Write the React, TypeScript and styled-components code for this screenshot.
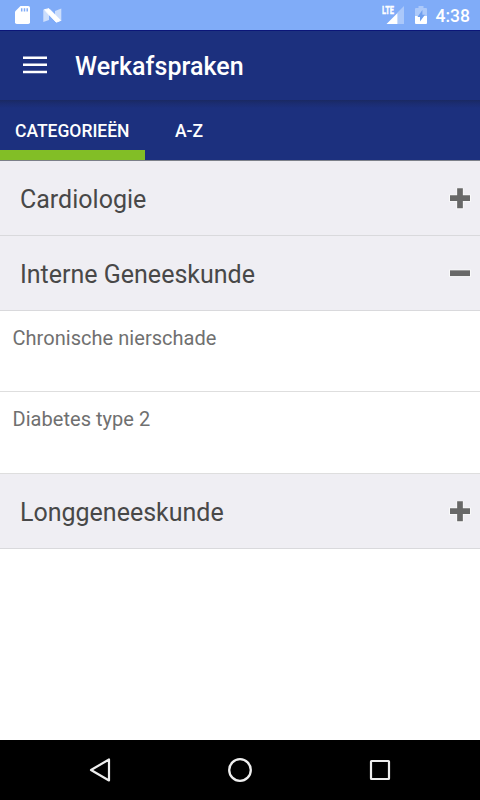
import React, { useState } from "react";
import styled, { createGlobalStyle } from "styled-components";

const GlobalStyle = createGlobalStyle`
  * { box-sizing: border-box; }
  body { margin: 0; background: #fff; font-family: Roboto, sans-serif; }
  button { font: inherit; border: 0; padding: 0; background: none; text-align: left; }
  svg { display: block; flex: none; }
`;

const Screen = styled.div`
  display: flex;
  flex-direction: column;
  width: 480px;
  height: 800px;
  overflow: hidden;
  background: #fff;
`;

const StatusBar = styled.header`
  display: flex;
  align-items: center;
  justify-content: space-between;
  height: 30px;
  padding: 0 10px 0 15px;
  background: #80acf8;
  flex: none;
`;

const StatusGroup = styled.div<{ $gap: number }>`
  display: flex;
  align-items: center;
  gap: ${(p) => p.$gap}px;
`;

const Clock = styled.span`
  margin-left: -1px;
  padding-top: 2px;
  color: #fff;
  font-size: 17.5px;
  font-weight: 500;
  line-height: 30px;
`;

const AppBar = styled.div`
  display: flex;
  align-items: center;
  height: 70px;
  padding-left: 23px;
  background: #1c307e;
  border-top: 1px solid #0b1679;
  flex: none;
`;

const MenuButton = styled.button`
  width: 24px;
  height: 20px;
  margin: -2px 28px 0 0;
`;

const Title = styled.h1`
  margin: 3px 0 0;
  color: #fff;
  font-size: 25px;
  font-weight: 500;
  line-height: 30px;
  letter-spacing: 0.05px;
`;

const Tabs = styled.nav`
  display: flex;
  height: 61px;
  background: linear-gradient(#1a2962 0, #1b2c70 3px, #1c307e 8px);
  border-bottom: 1px solid #7c8089;
  flex: none;
`;

const Tab = styled.button<{ $active: boolean; $width: number }>`
  width: ${(p) => p.$width}px;
  height: 60px;
  padding-top: 12px;
  border-bottom: 10px solid ${(p) => (p.$active ? "#82be26" : "transparent")};
  color: #fff;
  font-size: 17.5px;
  font-weight: 500;
  line-height: 38px;
  letter-spacing: -0.03px;
  text-align: center;
  white-space: nowrap;
`;

const List = styled.main`
  flex: 1;
`;

const GroupRow = styled.button`
  display: flex;
  align-items: center;
  justify-content: space-between;
  width: 100%;
  height: 75px;
  padding: 2px 9px 0 20px;
  background: #efeef3;
  border-bottom: 1px solid #d9d9dc;
  color: #484848;
  font-size: 25px;
  line-height: 30px;
`;

const GroupName = styled.span`
  padding-top: 2px;
`;

const ItemList = styled.div`
  padding-bottom: 1px;
  background: #dedede;
`;

const ItemRow = styled.div`
  height: 81px;
  padding: 15px 12.5px;
  background: #fff;
  border-bottom: 1px solid #dedede;
  color: #707070;
  font-size: 20px;
  line-height: 25px;
  letter-spacing: 0.04px;

  &:last-child {
    border-bottom-color: #fff;
  }
`;

const NavBar = styled.footer`
  display: flex;
  align-items: center;
  justify-content: space-between;
  height: 60px;
  padding: 0 85px;
  background: #000;
  flex: none;
`;

const SdCardIcon = () => (
  <svg width="15" height="18" viewBox="0 0 15 18">
    <path d="M5.5 0H13.2Q15 0 15 1.8V16.2Q15 18 13.2 18H1.8Q0 18 0 16.2V5.5Z" fill="#fff" />
    <path d="M6.7 2.2V5.5M9.5 2.2V5.5M12.2 2.2V5.5" stroke="#80acf8" strokeWidth="1.5" />
  </svg>
);

const NougatIcon = () => (
  <svg width="19" height="15" viewBox="0 0 19 15">
    <path d="M.3 1.5 6 6V12L.3 14ZM18.3 .5V13L12 9V3Z" fill="#fff" opacity=".6" />
    <path d="M1.3 1.7 6 .7 17.7 12.5 13.3 14.2Z" fill="#fff" stroke="#fff" strokeLinejoin="round" />
  </svg>
);

const SignalText = styled.text`
  font: 700 10.5px Roboto, sans-serif;
`;

const SignalIcon = () => (
  <svg width="23" height="20" viewBox="0 0 23 20">
    <path d="M22 1V19H15.5V7.5Z" fill="#fff" opacity=".34" />
    <path d="M4.5 19 15.5 8V19Z" fill="#fff" />
    <SignalText
      x="0"
      y="8.8"
      textLength="12"
      lengthAdjust="spacingAndGlyphs"
      fill="#fff"
      stroke="#fff"
      strokeWidth=".35"
    >
      LTE
    </SignalText>
  </svg>
);

const BatteryIcon = () => (
  <svg width="12" height="18" viewBox="0 0 12 18">
    <path d="M3.5 0H8.5V2H11Q12 2 12 3V10H0V3Q0 2 1 2H3.5Z" fill="#fff" opacity=".35" />
    <path d="M0 10H12V17Q12 18 11 18H1Q0 18 0 17Z" fill="#fff" />
    <path d="M7.4 4V8.7H10L5 15.6V11H2.4Z" fill="#6f9fef" />
  </svg>
);

const MenuIcon = () => (
  <svg width="24" height="20" viewBox="0 0 24 20">
    <path d="M0 2.75H24M0 9.75H24M0 17H24" stroke="#fff" strokeWidth="2.5" />
  </svg>
);

const ToggleIcon = ({ open }: { open: boolean }) => (
  <svg width="22" height="22" viewBox="0 0 22 22">
    <path d={open ? "M0 10.2H22" : "M0 10.2H22M11 0V21.3"} stroke="#fafafa" strokeWidth="7.2" />
    <path d={open ? "M1 10.2H21" : "M1 10.2H21M11 .2V20.3"} stroke="#686868" strokeWidth="5.7" />
  </svg>
);

const BackIcon = () => (
  <svg width="30" height="30" viewBox="0 0 30 30">
    <path d="M24 4.5V25.5L6 15Z" fill="none" stroke="#eee" strokeWidth="2.2" strokeLinejoin="round" />
  </svg>
);

const HomeIcon = () => (
  <svg width="30" height="30" viewBox="0 0 30 30">
    <circle cx="15" cy="15" r="10.8" fill="none" stroke="#eee" strokeWidth="2.3" />
  </svg>
);

const RecentsIcon = () => (
  <svg width="30" height="30" viewBox="0 0 30 30">
    <rect x="6" y="6" width="18" height="18" rx=".5" fill="none" stroke="#eee" strokeWidth="2.2" />
  </svg>
);

const groups = [
  { name: "Cardiologie", items: [] as string[] },
  { name: "Interne Geneeskunde", items: ["Chronische nierschade", "Diabetes type 2"] },
  { name: "Longgeneeskunde", items: [] as string[] },
];

const tabs = [
  { label: "CATEGORIEËN", width: 144.5 },
  { label: "A-Z", width: 89 },
];

export default function App() {
  const [activeTab, setActiveTab] = useState(0);
  const [openGroup, setOpenGroup] = useState<string | null>("Interne Geneeskunde");

  return (
    <>
      <GlobalStyle />
      <Screen>
        <StatusBar>
          <StatusGroup $gap={13}>
            <SdCardIcon />
            <NougatIcon />
          </StatusGroup>
          <StatusGroup $gap={10}>
            <SignalIcon />
            <BatteryIcon />
            <Clock>4:38</Clock>
          </StatusGroup>
        </StatusBar>
        <AppBar>
          <MenuButton aria-label="Menu"><MenuIcon /></MenuButton>
          <Title>Werkafspraken</Title>
        </AppBar>
        <Tabs>
          {tabs.map((tab, i) => (
            <Tab key={tab.label} $active={activeTab === i} $width={tab.width} onClick={() => setActiveTab(i)}>
              {tab.label}
            </Tab>
          ))}
        </Tabs>
        <List>
          {groups.map((group) => {
            const open = openGroup === group.name;
            return (
              <React.Fragment key={group.name}>
                <GroupRow aria-expanded={open} onClick={() => setOpenGroup(open ? null : group.name)}>
                  <GroupName>{group.name}</GroupName>
                  <ToggleIcon open={open} />
                </GroupRow>
                {open && group.items.length > 0 && (
                  <ItemList>
                    {group.items.map((item) => <ItemRow key={item}>{item}</ItemRow>)}
                  </ItemList>
                )}
              </React.Fragment>
            );
          })}
        </List>
        <NavBar>
          <BackIcon />
          <HomeIcon />
          <RecentsIcon />
        </NavBar>
      </Screen>
    </>
  );
}
